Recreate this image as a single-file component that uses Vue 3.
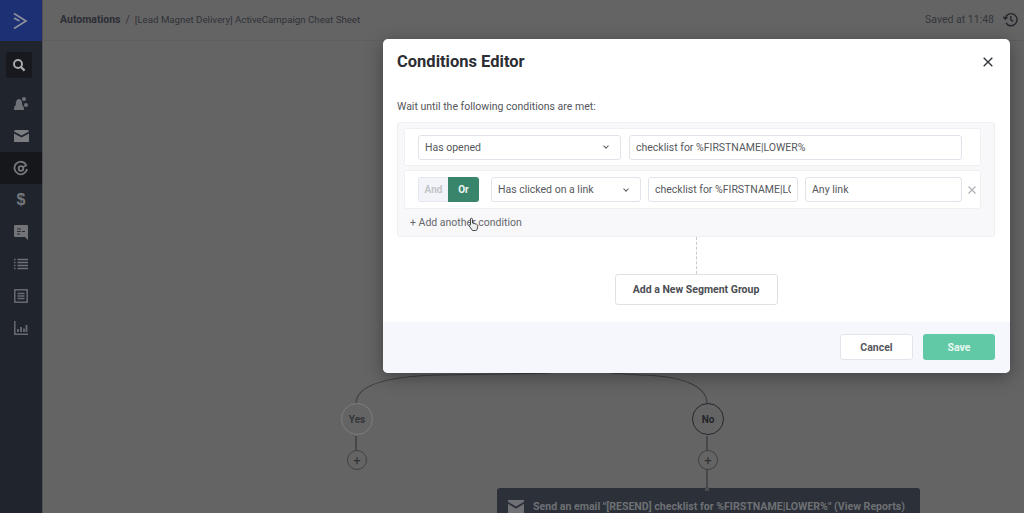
<script setup>
const navIcons = ['contacts', 'mail', 'auto', 'deal', 'chat', 'list', 'form', 'report']
const longValue = 'checklist for %FIRSTNAME|LOWER%'
</script>

<template>
  <div class="page">
    <aside class="sidebar">
      <div class="logo">
        <svg width="16" height="20" viewBox="0 0 16 20"><path d="M2 2.500 14 10 2 17.500M2 7l5.500 3" fill="none" stroke="#8b8f9c" stroke-width="1.700"/></svg>
      </div>
      <div class="search-wrap">
        <div class="search">
          <svg width="14" height="14" viewBox="0 0 14 14"><circle cx="6" cy="6" r="4" fill="none" stroke="#a9abaf" stroke-width="1.900"/><path d="m9 9 3.600 3.600" stroke="#a9abaf" stroke-width="2.200"/></svg>
        </div>
      </div>
      <nav class="nav">
        <div v-for="n in navIcons" :key="n" class="nav-item" :class="{ active: n === 'auto' }">
          <svg v-if="n === 'contacts'" width="16" height="16" viewBox="0 0 16 16" fill="#6f7277"><path d="M1 14c0-3 .8-4.500 2-5.200C2.500 7.500 3 3 6 3s3.500 4.500 3 5.800c1.200.7 2 2.200 2 5.200z"/><circle cx="11" cy="3" r="2"/><circle cx="13" cy="9" r="2"/></svg>
          <svg v-else-if="n === 'mail'" width="15" height="12" viewBox="0 0 15 12" fill="#7a7c80"><path d="M0 1.500 Q0 0 1.500 0h12Q15 0 15 1.500L7.500 5.500z"/><path d="M0 3.500 7.500 7.500 15 3.500V12H0z"/></svg>
          <svg v-else-if="n === 'auto'" width="16" height="16" viewBox="0 0 16 16" fill="none" stroke="#777a7e" stroke-width="1.800"><path d="M13 4.500A6.300 6.300 0 1 0 14 9"/><circle cx="8" cy="8.500" r="2.300"/><path d="m10 7 4-2"/></svg>
          <span v-else-if="n === 'deal'" class="dollar">$</span>
          <svg v-else-if="n === 'chat'" width="14" height="15" viewBox="0 0 14 15"><path d="M1 0h12a1 1 0 0 1 1 1v14l-3-3H1a1 1 0 0 1-1-1V1a1 1 0 0 1 1-1z" fill="#727477"/><path d="M3 4h4M3 6.500h4M3 9h3M8 6.500h3" stroke="#2b2e34" stroke-width="1.200"/></svg>
          <svg v-else-if="n === 'list'" width="14" height="12" viewBox="0 0 14 12" stroke="#6d7074" stroke-width="1.600"><path d="M0 1.500h1.500M0 4.500h1.500M0 7.500h1.500M0 10.500h1.500M3.500 1.500H14M3.500 4.500H14M3.500 7.500H14M3.500 10.500H14"/></svg>
          <svg v-else-if="n === 'form'" width="14" height="14" viewBox="0 0 14 14" fill="none" stroke="#686b6f" stroke-width="1.500"><rect x=".8" y=".8" width="12.400" height="12.400"/><path d="M3.500 4.500h7M3.500 7h7M3.500 9.500h7"/></svg>
          <svg v-else width="14" height="14" viewBox="0 0 14 14" fill="none" stroke="#686b6f" stroke-width="1.500"><path d="M.8 0v13.200H14"/><path d="M4 11V8M7 11V6M10 11V7.500M12.500 11V4" stroke-width="1.800"/></svg>
        </div>
      </nav>
    </aside>

    <main class="canvas">
      <header class="topbar">
        <div class="crumbs"><b>Automations</b><span class="sep">/</span><span class="doc">[Lead Magnet Delivery] ActiveCampaign Cheat Sheet</span></div>
        <div class="saved">
          <span>Saved at 11:48</span>
          <svg width="15" height="15" viewBox="0 0 15 15" fill="none" stroke="#25272c" stroke-width="1.400"><path d="M2.200 6.200A6 6 0 1 1 3 11"/><path d="M.3 4.800 2.300 7l2.300-1.800"/><path d="M7.800 4v3.800l2.400 1.500"/></svg>
        </div>
      </header>

      <svg class="wires" width="982" height="513" viewBox="0 0 982 513" fill="none" stroke="#3d3f44" stroke-width="1.200">
        <path d="M315 404C315 385 345 376 400 375L510 373M666 404C666 385 640 376 600 375L570 373"/>
        <path d="M315 436v15M666 436v15M666 469v20" stroke-width="1.500"/>
      </svg>

      <div class="node" style="left:298px;top:403px">Yes</div>
      <div class="node no" style="left:649px;top:403px">No</div>
      <div class="plus" style="left:304px;top:450px">+</div>
      <div class="plus" style="left:655px;top:450px">+</div>
      <div class="email" style="left:454px;top:488px">
        <svg width="16" height="13" viewBox="0 0 15 12" fill="#6f7175"><path d="M0 0h15v1.500L7.500 6 0 1.500z"/><path d="M0 3.500 7.500 8 15 3.500V12H0z"/></svg>
        <span>Send an email "[RESEND] checklist for %FIRSTNAME|LOWER%" (View Reports)</span>
        <i class="dot"></i>
      </div>
    </main>

    <section class="modal">
      <div class="modal-head">
        <h1>Conditions Editor</h1>
        <svg width="10" height="10" viewBox="0 0 10 10" stroke="#33363b" stroke-width="1.400"><path d="m.7.7 8.600 8.600M9.300.7.700 9.300"/></svg>
      </div>
      <div class="modal-body">
        <p class="lead">Wait until the following conditions are met:</p>
        <div class="group">
          <div class="row first">
            <div class="field select w203"><span>Has opened</span><i class="caret"></i></div>
            <input class="field grow" readonly :value="longValue">
          </div>
          <div class="row second">
            <div class="toggle"><span class="and">And</span><span class="or">Or</span></div>
            <div class="field select w150"><span>Has clicked on a link</span><i class="caret"></i></div>
            <input class="field w150" readonly :value="longValue">
            <input class="field w157" readonly value="Any link">
            <svg class="remove" width="8" height="8" viewBox="0 0 8 8" stroke="#aeb0b3" stroke-width="1.200"><path d="m.5.5 7 7M7.500.5l-7 7"/></svg>
          </div>
          <div class="add">+ Add another condition</div>
        </div>
        <div class="link"></div>
        <button class="btn segment">Add a New Segment Group</button>
      </div>
      <footer class="modal-foot">
        <button class="btn cancel">Cancel</button>
        <button class="btn save">Save</button>
      </footer>
      <svg class="cursor" width="11" height="15" viewBox="0 0 11 15"><path d="M2.500 1.500c1-.8 2 0 2 1V6l4 1.200c1 .4 1.500 1 1.300 2l-.8 3.300c-.1.700-.6 1-1.200 1H4.500L1.200 9c-.6-.8.300-1.800 1.300-1.200z" fill="#eee" stroke="#45474b" stroke-width="1"/></svg>
    </section>
  </div>
</template>

<style>
html, body { margin: 0; background: #646464; overflow: hidden; }
</style>

<style scoped>
.page { width: 1024px; height: 513px; display: flex; position: relative; overflow: hidden; background: #646464; font-family: Roboto, "Noto Sans", sans-serif; color: #2a2c31; }
.sidebar { width: 43px; flex: none; background: #20242c; border-right: 1px solid #505154; box-sizing: border-box; display: flex; flex-direction: column; }
.logo { height: 41px; background: #1c3073; display: flex; align-items: center; justify-content: center; padding-right: 3px; box-sizing: border-box; }
.search-wrap { padding: 11px 6px 10px; }
.search { width: 26px; height: 26px; border-radius: 3px; background: #17191e; display: flex; align-items: center; justify-content: center; }
.nav { display: flex; flex-direction: column; }
.nav-item { height: 32px; display: flex; align-items: center; justify-content: center; }
.nav-item.active { background: #15171b; }
.dollar { font: 700 16px "Liberation Sans", sans-serif; color: #74777b; }

.canvas { flex: 1; position: relative; }
.topbar { height: 41px; box-sizing: border-box; display: flex; align-items: center; justify-content: space-between; padding: 0 6px 2px 17px; font-size: 10.500px; border-bottom: 1px solid #5f5f5f; }
.crumbs b { font-weight: 700; color: #2c2e36; }
.crumbs span { color: #303238; }
.crumbs .doc { font-size: 9.700px; }
.sep { margin: 0 5px; }
.saved { display: flex; align-items: center; gap: 9px; color: #33353a; }
.wires { position: absolute; left: -2px; top: 0; }
.node { position: absolute; width: 30px; height: 30px; border-radius: 50%; border: 1.500px solid #7b7c7e; background: #646464; display: flex; align-items: center; justify-content: center; font-size: 10px; font-weight: 700; color: #333539; }
.node.no { border-color: #26282d; color: #22242a; }
.plus { position: absolute; width: 18px; height: 18px; border-radius: 50%; border: 1.500px solid #3f4146; background: #646464; display: flex; align-items: center; justify-content: center; font-size: 13px; line-height: 1; color: #2e3035; }
.email { position: absolute; width: 423px; height: 65px; box-sizing: border-box; background: #2c3039; border-radius: 3px; padding: 12px 10px 0 11px; display: flex; align-items: flex-start; gap: 9px; font-size: 10.600px; font-weight: 700; color: #6e7074; white-space: nowrap; }
.email svg { flex: none; }
.dot { position: absolute; left: 208px; top: -1px; width: 4px; height: 4px; background: #4a4c50; }

.modal { position: absolute; left: 383px; top: 39px; width: 627px; height: 334px; background: #fff; border-radius: 5px; box-shadow: 0 4px 18px rgba(0,0,0,.35); display: flex; flex-direction: column; overflow: hidden; }
.modal-head { height: 45px; flex: none; padding: 0 17px 0 14px; display: flex; align-items: center; justify-content: space-between; box-sizing: border-box; }
.modal-head h1 { margin: 0; font-size: 16.500px; font-weight: 700; color: #2c2e33; }
.modal-body { flex: 1; padding: 0 15px 0 14px; display: flex; flex-direction: column; align-items: center; }
.lead { align-self: flex-start; margin: 15px 0 8px; font-size: 10.500px; line-height: 15px; color: #54565b; }
.group { align-self: stretch; height: 115px; box-sizing: border-box; background: #f8f8fa; border: 1px solid #f0f0f3; border-radius: 3px; padding: 5px 13px 0 6px; }
.row { background: #fff; border: 1px solid #f0f0f3; border-radius: 2px; box-sizing: border-box; display: flex; align-items: center; padding-left: 13px; }
.first { height: 38px; gap: 8px; padding-right: 18px; margin-bottom: 4px; }
.second { height: 39px; gap: 7px; }
.field { height: 25px; box-sizing: border-box; background: #fff; border: 1px solid #e2e3ea; border-radius: 3px; padding: 0 6px; font-family: inherit; font-size: 10.500px; line-height: 23px; color: #56585c; white-space: nowrap; overflow: hidden; outline: none; min-width: 0; }
.select { display: flex; align-items: center; justify-content: space-between; padding-right: 12px; }
.grow { flex: 1; }
.w203 { width: 203px; flex: none; }
.w150 { width: 150px; flex: none; }
.w157 { width: 157px; flex: none; }
.caret { width: 3px; height: 3px; border-right: 1px solid #5a5c60; border-bottom: 1px solid #5a5c60; transform: translateY(-1px) rotate(45deg); }
.toggle { width: 61px; height: 25px; flex: none; display: flex; border-radius: 3px; overflow: hidden; margin-right: 5px; font-size: 10px; font-weight: 700; line-height: 25px; text-align: center; }
.and { width: 30px; background: #f3f4f9; color: #c3c5c9; border: 1px solid #e6e7ee; border-right: 0; box-sizing: border-box; line-height: 23px; }
.or { flex: 1; background: #38856c; color: #eef5f2; }
.remove { margin-left: -1px; }
.add { margin: 7px 0 0 6px; font-size: 10.500px; line-height: 14px; color: #65676b; }
.link { height: 37px; width: 0; border-left: 1px dashed #c9cace; flex: none; }
.btn { box-sizing: border-box; border-radius: 3px; font: 700 10.500px Roboto, "Noto Sans", sans-serif; padding: 0; }
.segment { width: 163px; height: 31px; background: #fff; border: 1px solid #e0e1e7; color: #4b4d52; flex: none; }
.modal-foot { height: 51px; flex: none; background: #f6f7fd; box-sizing: border-box; padding: 12px 15px 0 0; display: flex; justify-content: flex-end; align-items: flex-start; gap: 10px; }
.cancel { width: 73px; height: 26px; background: #fff; border: 1px solid #e4e5ec; color: #55575c; }
.save { width: 72px; height: 26px; background: #62c9a6; border: 0; color: #e9f7f2; }
.cursor { position: absolute; left: 85px; top: 178px; }
</style>
